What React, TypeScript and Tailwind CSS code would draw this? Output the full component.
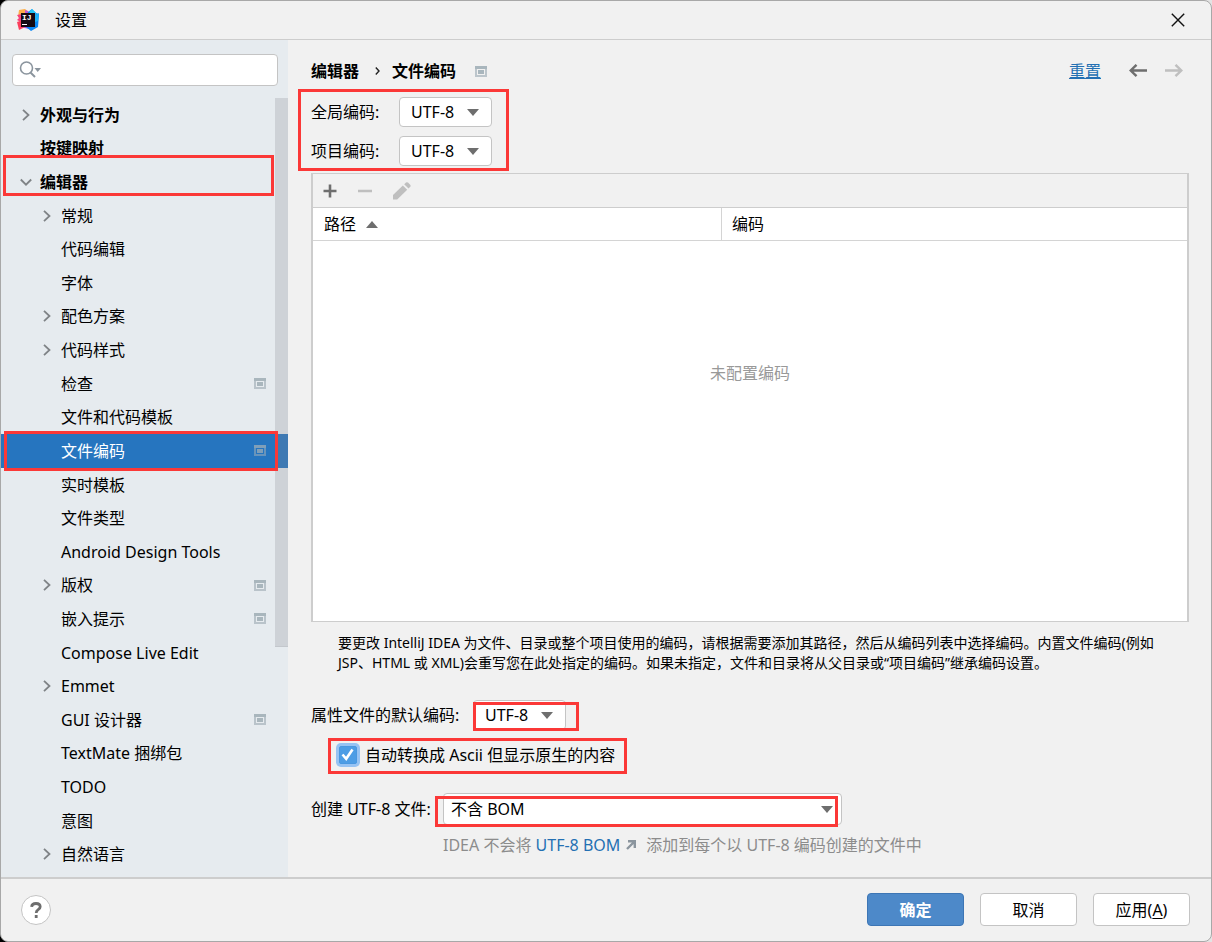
import React, { useState } from 'react';
import clsx from 'clsx';

interface TreeItem {
  name: string;
  level: 0 | 1;
  arrow?: 'right' | 'down';
  project?: boolean;
  outlined?: boolean;
}

const treeItems: TreeItem[] = [
  { name: '外观与行为', level: 0, arrow: 'right' },
  { name: '按键映射', level: 0 },
  { name: '编辑器', level: 0, arrow: 'down', outlined: true },
  { name: '常规', level: 1, arrow: 'right' },
  { name: '代码编辑', level: 1 },
  { name: '字体', level: 1 },
  { name: '配色方案', level: 1, arrow: 'right' },
  { name: '代码样式', level: 1, arrow: 'right' },
  { name: '检查', level: 1, project: true },
  { name: '文件和代码模板', level: 1 },
  { name: '文件编码', level: 1, project: true, outlined: true },
  { name: '实时模板', level: 1 },
  { name: '文件类型', level: 1 },
  { name: 'Android Design Tools', level: 1 },
  { name: '版权', level: 1, arrow: 'right', project: true },
  { name: '嵌入提示', level: 1, project: true },
  { name: 'Compose Live Edit', level: 1 },
  { name: 'Emmet', level: 1, arrow: 'right' },
  { name: 'GUI 设计器', level: 1, project: true },
  { name: 'TextMate 捆绑包', level: 1 },
  { name: 'TODO', level: 1 },
  { name: '意图', level: 1 },
  { name: '自然语言', level: 1, arrow: 'right' },
];

const Logo = () => (
  <svg width="22" height="22" viewBox="0 0 22 22" aria-hidden="true">
    <path d="M2 1 L8 0 L13 4 L8 12 L1 8 Z" fill="#fdae4a" />
    <path d="M8 1 L11 2 L13 5 L8 5 Z" fill="#c45ad0" />
    <path d="M0 6 L5 5 L6 14 L0 11 L2 9 Z" fill="#f7417a" />
    <path d="M0 13 L6 11 L10 18 L6 19 L2 21 Z" fill="#fc3f5b" />
    <path d="M5 17 L11 17 L12 20 L8 19 Z" fill="#b04be0" />
    <path d="M11 3 L15 0 L19 4 L22 5 L21 18 L14 22 L9 18 Z" fill="#0b87f6" />
    <path d="M12 3 L15 0 L19 4 L18 8 Z" fill="#21c6f4" />
    <path d="M18 6 L22 4 L21 12 L18 13 Z" fill="#1cb4f8" />
    <rect x="4" y="4" width="14" height="14" fill="#150a12" />
    <text x="5" y="11" fill="#fff" fontSize="8" fontWeight="700" fontFamily="Liberation Mono, monospace">IJ</text>
    <rect x="5" y="15" width="5" height="1" fill="#fff" />
  </svg>
);

const ProjectIcon = ({ selected }: { selected?: boolean }) => (
  <svg width="12" height="11" viewBox="0 0 12 11" aria-hidden="true" className={selected ? 'text-[#7f9fb9]' : 'text-[#a9b6bd]'}>
    <path d="M0 0H12V11H0Z M2 3V9H10V3Z" fill="currentColor" fillRule="evenodd" opacity="0.75" />
    <rect width="12" height="3" fill="currentColor" />
    <rect x="3" y="4" width="6" height="4" fill="currentColor" />
  </svg>
);

const TreeArrow = ({ direction }: { direction: 'right' | 'down' }) => (
  <svg width="12" height="12" viewBox="0 0 12 12" fill="none" stroke="#7f8386" strokeWidth="1.8" aria-hidden="true">
    {direction === 'right' ? <path d="M3 0.8 L8.5 6 L3 11.2" /> : <path d="M0.8 3.5 L6 8.7 L11.2 3.5" />}
  </svg>
);

const Triangle = ({ up }: { up?: boolean }) => (
  <svg width="12" height="7" viewBox="0 0 12 7" fill="#6e6e6e" aria-hidden="true">
    {up ? <path d="M6 0 L12 7 H0 Z" /> : <path d="M0 0 H12 L6 7 Z" />}
  </svg>
);

// red marker frame drawn over a block
const Outline = ({ className }: { className: string }) => (
  <div className={clsx('pointer-events-none absolute z-10 border-3 border-[#fb3837]', className)} />
);

interface ComboProps {
  id: string;
  options: string[];
  wide?: boolean;
}

const Combo: React.FC<ComboProps> = ({ id, options, wide }) => (
  <div className={clsx('relative', wide ? 'w-[399px]' : 'w-[93px]')}>
    <select
      id={id}
      className={clsx(
        'block w-full appearance-none rounded border border-[#c4c4c4] bg-white outline-none',
        wide ? 'h-8 pl-[7px]' : 'h-[30px] pl-[11px]'
      )}
    >
      {options.map((o) => (
        <option key={o}>{o}</option>
      ))}
    </select>
    <span className={clsx('pointer-events-none absolute inset-y-0 flex items-center', wide ? 'right-[9px]' : 'right-[13px]')}>
      <Triangle />
    </span>
  </div>
);

const Sidebar = () => {
  const [current, setCurrent] = useState('文件编码');

  return (
    <aside className="relative flex w-[287px] shrink-0 flex-col bg-[#e6ebef] pt-3.5 pb-1.5">
      <div className="relative mr-2.5 ml-[11px]">
        <input
          type="text"
          aria-label="搜索"
          className="block h-8 w-full rounded border border-[#c4c4c4] bg-white pr-2 pl-9 outline-none"
        />
        <svg width="22" height="17" viewBox="0 0 22 17" fill="none" aria-hidden="true" className="pointer-events-none absolute top-[7px] left-[7px]">
          <circle cx="7.5" cy="7" r="6" stroke="#8b959e" strokeWidth="1.6" />
          <path d="M11.5 11.5 L16 16" stroke="#8b959e" strokeWidth="2" />
          <path d="M15.5 7 H22 L18.7 11 Z" fill="#8b959e" />
        </svg>
      </div>

      <div className="relative mt-3 flex flex-1 flex-col">
        {treeItems.map((item) => {
          const selected = item.name === current;
          return (
            <button
              key={item.name}
              type="button"
              onClick={() => setCurrent(item.name)}
              className={clsx(
                'relative flex min-h-8 flex-1 items-center pr-[22px] text-left',
                item.level === 0 ? 'pl-[19px] font-bold' : 'pl-10',
                selected && 'bg-[#2675bf] text-white'
              )}
            >
              <span className="w-5 shrink-0">{item.arrow && <TreeArrow direction={item.arrow} />}</span>
              <span className="flex-1">{item.name}</span>
              {item.project && <ProjectIcon selected={selected} />}
              {item.outlined && (
                <Outline className={item.level === 0 ? '-top-2.5 right-3.5 left-0.5 h-[41px]' : '-top-[3px] right-2.5 left-[3px] h-10'} />
              )}
            </button>
          );
        })}
        <div className="pointer-events-none absolute top-0 right-0 h-[549px] w-[13px] border-b border-[#c3c7cc] bg-[#868790]/25" />
      </div>
    </aside>
  );
};

const EncodingTable = () => (
  <div className="flex flex-1 flex-col border-x-2 border-y border-[#cdcdcd] bg-white">
    <div className="flex h-[34px] items-center gap-[21px] border-b border-[#cdcdcd] bg-[#f1f1f1] pl-2.5">
      <button type="button" aria-label="添加">
        <svg width="14" height="14" viewBox="0 0 14 14" fill="none" stroke="#6e6e6e" strokeWidth="2.6">
          <path d="M7 0.5 V13.5 M0.5 7 H13.5" />
        </svg>
      </button>
      <button type="button" aria-label="移除" disabled>
        <svg width="14" height="14" viewBox="0 0 14 14" fill="none" stroke="#bfbfbf" strokeWidth="2.6">
          <path d="M0 7 H14" />
        </svg>
      </button>
      <button type="button" aria-label="编辑" disabled>
        <svg width="18" height="18" viewBox="0 0 18 18" fill="#bfbfbf">
          <path d="M0 17.5 V13 L9.8 3.5 L14.2 7.8 L4.2 17.5 Z" />
          <path d="M11.2 2.3 L13 0.5 Q14 -0.2 15 0.6 L17.2 2.8 Q18 3.8 17.3 4.7 L15.5 6.5 Z" />
        </svg>
      </button>
    </div>
    <table className="w-full table-fixed border-separate border-spacing-0">
      <thead>
        <tr className="h-[33px] text-left">
          <th className="w-[409px] border-r border-b border-[#d4d4d4] pl-[11px] font-normal">
            <span className="flex items-center gap-2.5">
              路径 <Triangle up />
            </span>
          </th>
          <th className="border-b border-[#d4d4d4] pl-2.5 font-normal">编码</th>
        </tr>
      </thead>
      <tbody>
        <tr>
          <td colSpan={2} className="pt-[120px] text-center text-[#999999]">未配置编码</td>
        </tr>
      </tbody>
    </table>
  </div>
);

const EncodingPage = () => {
  const [convert, setConvert] = useState(true);

  return (
    <main className="flex min-w-0 flex-1 flex-col pt-[19px] pr-[22px] pb-5 pl-[23px]">
      <div className="flex h-6 items-center">
        <h1 className="flex items-center font-bold">
          编辑器
          <svg width="5" height="8" viewBox="0 0 5 8" fill="none" stroke="#222" strokeWidth="1.4" aria-hidden="true" className="mr-3 ml-4">
            <path d="M0.8 0.5 L4 4 L0.8 7.5" />
          </svg>
          文件编码
        </h1>
        <span className="ml-[19px]">
          <ProjectIcon />
        </span>
        <a href="#reset" className="ml-auto text-[#2470b3] underline underline-offset-1">重置</a>
        <button type="button" aria-label="后退" className="ml-7">
          <svg width="18" height="14" viewBox="0 0 18 14" fill="none" stroke="#6e6e6e" strokeWidth="2.4">
            <path d="M18 6.5 H2 M7.5 0.8 L1.7 6.5 L7.5 12.2" />
          </svg>
        </button>
        <button type="button" aria-label="前进" disabled className="mr-1.5 ml-[18px]">
          <svg width="18" height="14" viewBox="0 0 18 14" fill="none" stroke="#bfbfbf" strokeWidth="2.4">
            <path d="M0 6.5 H16 M10.5 0.8 L16.3 6.5 L10.5 12.2" />
          </svg>
        </button>
      </div>

      <div className="relative mt-3.5 mb-[7px] flex flex-col gap-[9px] self-start">
        <div className="flex items-center">
          <label htmlFor="global-encoding" className="w-22">全局编码:</label>
          <Combo id="global-encoding" options={['UTF-8', 'GBK']} />
        </div>
        <div className="flex items-center">
          <label htmlFor="project-encoding" className="w-22">项目编码:</label>
          <Combo id="project-encoding" options={['UTF-8', 'GBK']} />
        </div>
        <Outline className="-top-2 -right-[17px] -bottom-[5px] -left-[13px]" />
      </div>

      <EncodingTable />

      <p className="mt-[11px] mr-5 ml-[27px] text-sm/5">
        要更改 IntelliJ IDEA 为文件、目录或整个项目使用的编码，请根据需要添加其路径，然后从编码列表中选择编码。内置文件编码(例如 JSP、HTML 或 XML)会重写您在此处指定的编码。如果未指定，文件和目录将从父目录或“项目编码”继承编码设置。
      </p>

      <div className="mt-[27px] flex items-center">
        <label htmlFor="properties-encoding" className="w-[162px]">属性文件的默认编码:</label>
        <div className="relative">
          <Combo id="properties-encoding" options={['UTF-8', 'GBK']} />
          <Outline className="top-0.5 -right-[13px] -bottom-px left-0" />
        </div>
      </div>

      <div className="relative mt-[13px] ml-7 flex h-6 items-center self-start">
        <span className="relative flex">
          <input
            id="native-to-ascii"
            type="checkbox"
            checked={convert}
            onChange={(e) => setConvert(e.target.checked)}
            className="mr-2 h-[18px] w-[18px] appearance-none rounded-xs border border-[#b0b0b0] bg-white ring-3 ring-[#97c3f3] checked:border-[#4a98e0] checked:bg-[#4d9de5]"
          />
          {convert && (
            <svg width="18" height="18" viewBox="0 0 18 18" fill="none" stroke="#fff" strokeWidth="2.6" aria-hidden="true" className="pointer-events-none absolute top-0 left-0">
              <path d="M3.5 8.5 L7.2 12.8 L13.5 3.5" />
            </svg>
          )}
        </span>
        <label htmlFor="native-to-ascii">自动转换成 Ascii 但显示原生的内容</label>
        <Outline className="-top-[5px] -right-3 -bottom-[7px] -left-[11px]" />
      </div>

      <div className="mt-[26px] flex items-center">
        <label htmlFor="create-files" className="w-33">创建 UTF-8 文件:</label>
        <div className="relative">
          <Combo id="create-files" wide options={['不含 BOM', '包含 BOM']} />
          <Outline className="top-[3px] right-1 -bottom-0.5 -left-2" />
        </div>
      </div>
      <p className="mt-2 ml-33 flex h-6 items-center whitespace-pre text-[#8c8c8c]">
        IDEA 不会将 <a href="#bom" className="text-[#2470b3]">UTF-8 BOM</a>
        <svg width="10" height="10" viewBox="0 0 10 10" fill="none" stroke="#8b959e" strokeWidth="2.4" aria-hidden="true" className="mr-2.5 ml-1.5">
          <path d="M1 9 L8 2 M2 1.2 H8.8 V8" />
        </svg>
        添加到每个以 UTF-8 编码创建的文件中
      </p>
    </main>
  );
};

const Footer = () => {
  const button = 'h-[33px] w-[97px] rounded border';

  return (
    <footer className="flex h-16 items-center gap-4 border-t-2 border-[#cdcdcd] pr-[21px] pb-px pl-5">
      <button type="button" aria-label="帮助" className="mr-auto flex h-[30px] w-[30px] items-center justify-center rounded-full border border-[#c4c4c4] bg-white">
        <svg width="12" height="16" viewBox="0 0 12 16" fill="none" stroke="#6e6e6e" strokeWidth="2.8">
          <path d="M1.6 4.8 Q1.9 1.5 6 1.5 Q10.2 1.5 10.2 4.8 Q10.2 6.4 8.2 7.6 Q6.2 8.9 6.2 11" />
          <path d="M6.2 13 V16" />
        </svg>
      </button>
      <button type="button" className={clsx(button, 'border-[#3d76b5] bg-[#4d89c9] font-bold text-white')}>确定</button>
      <button type="button" className={clsx(button, 'border-[#c4c4c4] bg-white')}>取消</button>
      <button type="button" className={clsx(button, 'border-[#c4c4c4] bg-white')}>
        应用(<span className="underline underline-offset-2">A</span>)
      </button>
    </footer>
  );
};

export default function App() {
  return (
    <div className="flex min-h-screen flex-col bg-linear-to-r from-black to-[#e4e4e4] font-['Noto_Sans','Noto_Sans_CJK_SC',sans-serif] text-base text-black">
      <div className="flex flex-1 flex-col overflow-hidden rounded-lg border border-[#a8a8a8] bg-[#f1f1f1]">
        <header className="flex h-[39px] items-center border-b border-[#cdcdcd] pr-[26px] pl-4">
          <Logo />
          <span className="ml-4">设置</span>
          <button type="button" aria-label="关闭" className="ml-auto">
            <svg width="14" height="14" viewBox="0 0 14 14" fill="none" stroke="#111" strokeWidth="1.4">
              <path d="M0.8 0.8 L13.2 13.2 M13.2 0.8 L0.8 13.2" />
            </svg>
          </button>
        </header>
        <div className="flex flex-1">
          <Sidebar />
          <EncodingPage />
        </div>
        <Footer />
      </div>
    </div>
  );
}
